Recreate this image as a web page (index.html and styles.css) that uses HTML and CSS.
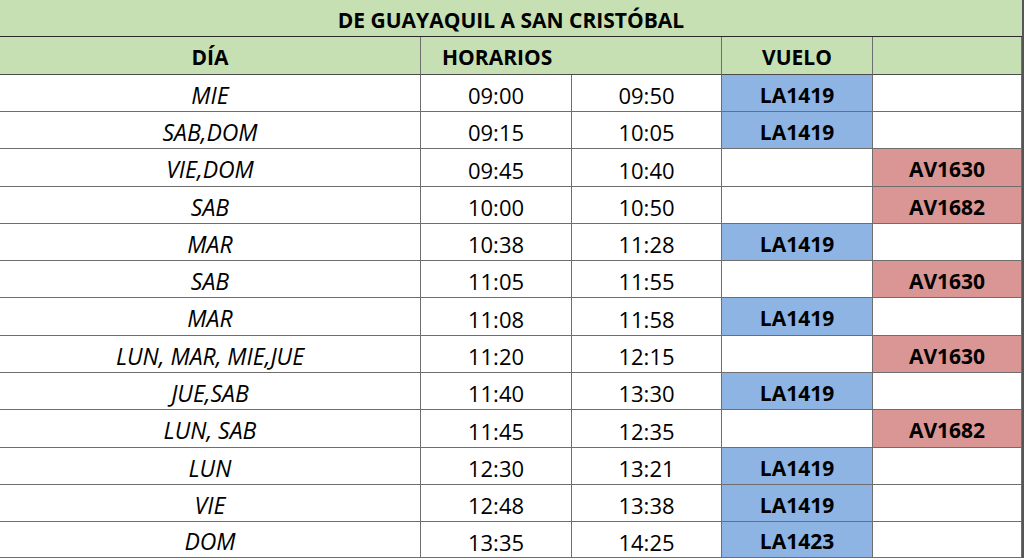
FILE: index.html
```html
<!DOCTYPE html>
<html lang="es">
<head>
<meta charset="utf-8">
<title>De Guayaquil a San Cristóbal</title>
<link rel="stylesheet" href="styles.css">
</head>
<body>
<div class="sheet">
  <div class="cell title">DE GUAYAQUIL A SAN CRISTÓBAL</div>
  <div class="cell head center">DÍA</div>
  <div class="cell head left span2">HORARIOS</div>
  <div class="cell head center">VUELO</div>
  <div class="cell head"></div>

  <div class="cell day">MIE</div><div class="cell t">09:00</div><div class="cell t">09:50</div><div class="cell la">LA1419</div><div class="cell"></div>
  <div class="cell day">SAB,DOM</div><div class="cell t">09:15</div><div class="cell t">10:05</div><div class="cell la">LA1419</div><div class="cell"></div>
  <div class="cell day">VIE,DOM</div><div class="cell t">09:45</div><div class="cell t">10:40</div><div class="cell"></div><div class="cell av">AV1630</div>
  <div class="cell day">SAB</div><div class="cell t">10:00</div><div class="cell t">10:50</div><div class="cell"></div><div class="cell av">AV1682</div>
  <div class="cell day">MAR</div><div class="cell t">10:38</div><div class="cell t">11:28</div><div class="cell la">LA1419</div><div class="cell"></div>
  <div class="cell day">SAB</div><div class="cell t">11:05</div><div class="cell t">11:55</div><div class="cell"></div><div class="cell av">AV1630</div>
  <div class="cell day">MAR</div><div class="cell t">11:08</div><div class="cell t">11:58</div><div class="cell la">LA1419</div><div class="cell"></div>
  <div class="cell day">LUN, MAR, MIE,JUE</div><div class="cell t">11:20</div><div class="cell t">12:15</div><div class="cell"></div><div class="cell av">AV1630</div>
  <div class="cell day">JUE,SAB</div><div class="cell t">11:40</div><div class="cell t">13:30</div><div class="cell la">LA1419</div><div class="cell"></div>
  <div class="cell day">LUN, SAB</div><div class="cell t">11:45</div><div class="cell t">12:35</div><div class="cell"></div><div class="cell av">AV1682</div>
  <div class="cell day">LUN</div><div class="cell t">12:30</div><div class="cell t">13:21</div><div class="cell la">LA1419</div><div class="cell"></div>
  <div class="cell day">VIE</div><div class="cell t">12:48</div><div class="cell t">13:38</div><div class="cell la">LA1419</div><div class="cell"></div>
  <div class="cell day">DOM</div><div class="cell t">13:35</div><div class="cell t">14:25</div><div class="cell la">LA1423</div><div class="cell"></div>
</div>
</body>
</html>
```
FILE: styles.css
```css
html, body {
  margin: 0;
  padding: 0;
  background: #ffffff;
}

.sheet {
  display: grid;
  width: 1022px;
  grid-template-columns: 421px 151px 150px 151px 149px;
  grid-template-rows: 37px 38px 37px 37px 38px 37px 37px 37px 38px 37px 37px 38px 37px 37px 36px;
  border-right: 2px solid #555555;
  font-family: "Open Sans", "Liberation Sans", sans-serif;
  font-size: 22px;
  color: #000000;
}

.cell {
  box-sizing: border-box;
  border-bottom: 1px solid #6e6e6e;
  border-right: 1px solid #6e6e6e;
  display: flex;
  align-items: center;
  justify-content: center;
  padding-top: 4px;
  line-height: 1;
  white-space: nowrap;
}

.title {
  grid-column: 1 / span 5;
  background: #c6e0b4;
  font-weight: 700;
  font-size: 21px;
  border-right: none;
  border-bottom: 1px solid #2b2b2b;
}

.head {
  background: #c6e0b4;
  font-weight: 700;
  font-size: 21px;
  border-bottom-color: #4a4a4a;
}

.head:last-child {
  border-right: none;
}

.left {
  justify-content: flex-start;
  padding-left: 21px;
}

.span2 {
  grid-column: span 2;
}

.day {
  font-style: italic;
  font-size: 23px;
}

.la {
  background: #8db4e2;
  font-weight: 700;
  font-size: 21px;
}

.av {
  background: #da9694;
  font-weight: 700;
  font-size: 21px;
}
```
